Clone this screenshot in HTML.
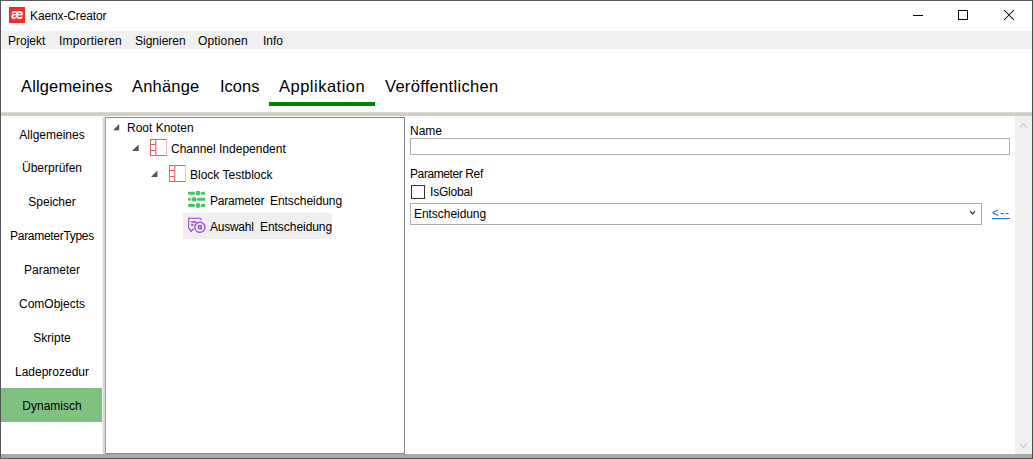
<!DOCTYPE html>
<html><head><meta charset="utf-8">
<style>
*{margin:0;padding:0;box-sizing:border-box}
html,body{width:1033px;height:459px;overflow:hidden;background:#fff}
body{position:relative;font-family:"Liberation Sans",sans-serif;color:#000}
.a{position:absolute;white-space:pre;line-height:1}
.t{position:absolute;white-space:pre;line-height:1;font-size:12px}
.n{position:absolute;left:2px;width:100px;text-align:center;white-space:pre;line-height:1;font-size:12px}
svg{position:absolute;overflow:visible}
</style></head><body>
<!-- window border -->
<div class="a" style="left:0;top:0;width:1033px;height:1px;background:#5c5c5c"></div>
<div class="a" style="left:0;top:0;width:1px;height:459px;background:#555"></div>
<div class="a" style="left:1032px;top:0;width:1px;height:459px;background:#4a4a4a"></div>

<!-- title bar -->
<div class="a" style="left:9px;top:7px;width:16px;height:16px;background:#f22c2c"></div>
<div class="a" style="left:9px;top:7px;width:16px;font-size:14px;font-weight:bold;color:#fff;text-align:center;letter-spacing:-0.5px">æ</div>
<div class="t" style="left:30px;top:10px;letter-spacing:-0.12px">Kaenx-Creator</div>

<!-- window controls -->
<div class="a" style="left:913px;top:15px;width:10px;height:1px;background:#000"></div>
<div class="a" style="left:958px;top:10px;width:10px;height:10px;border:1px solid #000"></div>
<svg style="left:1004px;top:10px" width="10" height="10" viewBox="0 0 10 10"><path d="M0 0L10 10M10 0L0 10" stroke="#000" stroke-width="1.05"/></svg>

<!-- menu -->
<div class="a" style="left:1px;top:31px;width:1031px;height:18px;background:#f0f0f0"></div>
<div class="t" style="left:8px;top:35px">Projekt</div>
<div class="t" style="left:59px;top:35px;letter-spacing:0.2px">Importieren</div>
<div class="t" style="left:135px;top:35px">Signieren</div>
<div class="t" style="left:198px;top:35px;letter-spacing:0.15px">Optionen</div>
<div class="t" style="left:263px;top:35px">Info</div>

<!-- tabs -->
<div class="a" style="left:21px;top:78px;font-size:16.5px;letter-spacing:0.15px">Allgemeines</div>
<div class="a" style="left:132px;top:78px;font-size:16.5px;letter-spacing:0.2px">Anhänge</div>
<div class="a" style="left:220px;top:78px;font-size:16.5px">Icons</div>
<div class="a" style="left:279px;top:78px;font-size:16.5px;letter-spacing:0.5px">Applikation</div>
<div class="a" style="left:385px;top:78px;font-size:16.5px;letter-spacing:0.3px">Veröffentlichen</div>
<div class="a" style="left:269px;top:102px;width:106px;height:4px;background:#007f00"></div>

<!-- separator band -->
<div class="a" style="left:1px;top:112px;width:1031px;height:4px;background:#d1cec0"></div>
<div class="a" style="left:1px;top:112px;width:1031px;height:1px;background:#dcdad0"></div>

<!-- left nav -->
<div class="a" style="left:1px;top:388px;width:101px;height:34px;background:#80c080"></div>
<div class="n" style="top:129px">Allgemeines</div>
<div class="n" style="top:162px">Überprüfen</div>
<div class="n" style="top:196px">Speicher</div>
<div class="n" style="top:230px;letter-spacing:-0.3px">ParameterTypes</div>
<div class="n" style="top:264px">Parameter</div>
<div class="n" style="top:298px">ComObjects</div>
<div class="n" style="top:332px">Skripte</div>
<div class="n" style="top:366px">Ladeprozedur</div>
<div class="n" style="top:400px">Dynamisch</div>

<!-- splitter -->
<div class="a" style="left:102px;top:117px;width:3px;height:337px;background:linear-gradient(90deg,#f0f0f0 0,#f0f0f0 1px,#dadada 1px,#dadada 3px)"></div>

<!-- tree -->
<div class="a" style="left:105px;top:117px;width:300px;height:337px;border:1px solid #828790;border-left-color:#9a9ea6;background:#fff"></div>
<svg style="left:0;top:0" width="1" height="1">
  <path d="M113 130.2L119.2 124L119.2 130.2Z" fill="#525252"/>
  <path d="M132 151L138.6 144.6L138.6 151Z" fill="#525252"/>
  <path d="M151 177L157.4 170.6L157.4 177Z" fill="#525252"/>
</svg>
<div class="t" style="left:127px;top:121.5px">Root Knoten</div>
<!-- channel icon -->
<svg style="left:150px;top:139px" width="17" height="17" viewBox="0 0 17 17">
  <g stroke="#df5f67" stroke-width="1" fill="none">
    <rect x="0.5" y="0.5" width="16" height="16"/>
    <path d="M0.5 5.5H5.5M0.5 11.5H5.5"/>
    <path d="M5.8 0.5V16.5" stroke-width="1.1"/>
    <path d="M16.5 0.5V16.5" stroke="#f0bcc0"/>
  </g>
</svg>
<div class="t" style="left:171px;top:143px">Channel Independent</div>
<!-- block icon -->
<svg style="left:169px;top:165px" width="17" height="17" viewBox="0 0 17 17">
  <g stroke="#df5f67" stroke-width="1" fill="none">
    <rect x="0.5" y="0.5" width="16" height="16"/>
    <path d="M0.5 5.5H5.5M0.5 11.5H5.5"/>
    <path d="M5.8 0.5V16.5" stroke-width="1.1"/>
    <path d="M16.5 0.5V16.5" stroke="#f0bcc0"/>
  </g>
</svg>
<div class="t" style="left:190px;top:168.5px">Block Testblock</div>
<!-- parameter icon -->
<svg style="left:188px;top:190px" width="18" height="18" viewBox="0 0 18 18">
  <g fill="#46c467">
    <rect x="0" y="1.7" width="7" height="3" rx="1"/>
    <rect x="13" y="1.7" width="4.2" height="3" rx="1"/>
    <circle cx="10" cy="3.2" r="2.4"/>
    <rect x="0" y="7.8" width="2.8" height="3" rx="1"/>
    <rect x="9" y="7.8" width="8.2" height="3" rx="1"/>
    <circle cx="6.1" cy="9.3" r="2.4"/>
    <rect x="0" y="14" width="7" height="3" rx="1"/>
    <rect x="13" y="14" width="4.2" height="3" rx="1"/>
    <circle cx="10" cy="15.5" r="2.4"/>
  </g>
</svg>
<div class="t" style="left:210px;top:195px;letter-spacing:-0.2px">Parameter</div>
<div class="t" style="left:270px;top:195px;letter-spacing:-0.05px">Entscheidung</div>
<!-- selection -->
<div class="a" style="left:183px;top:213px;width:149px;height:26px;background:#efefef"></div>
<!-- auswahl icon -->
<svg style="left:186px;top:215px" width="22" height="20" viewBox="0 0 22 20">
  <g stroke="#8d44d2" fill="none" stroke-width="1.1">
    <path d="M2.7 13.2V3.3H13.8Q15 3.3 15 4.5V5.6"/>
    <path d="M2.7 13.2L5 16.3L7.6 13.8" stroke-width="1.2"/>
    <path d="M5 7H10.3M5 10.1H7.7" stroke-width="1.5"/>
    <circle cx="13.9" cy="12.3" r="5.1" stroke-width="1.25"/>
    <circle cx="13.9" cy="12.1" r="1.6" stroke-width="1.5"/>
    <path d="M14.9 13.3L15.9 14.4" stroke-width="1.3"/>
  </g>
</svg>
<div class="t" style="left:210px;top:220.5px;letter-spacing:-0.25px">Auswahl</div>
<div class="t" style="left:260px;top:220.5px;letter-spacing:-0.05px">Entscheidung</div>

<!-- right panel -->
<div class="t" style="left:410px;top:124.6px">Name</div>
<div class="a" style="left:410px;top:138px;width:600px;height:17px;border:1px solid #abadb3"></div>
<div class="t" style="left:410px;top:167.6px;letter-spacing:-0.4px">Parameter Ref</div>
<div class="a" style="left:411px;top:185px;width:14px;height:14px;border:1px solid #333"></div>
<div class="t" style="left:430px;top:185.6px;letter-spacing:-0.2px">IsGlobal</div>
<div class="a" style="left:410px;top:203px;width:572px;height:22px;border:1px solid #acacac"></div>
<div class="t" style="left:414px;top:208px;letter-spacing:-0.05px">Entscheidung</div>
<svg style="left:969px;top:210px" width="7" height="5" viewBox="0 0 7 5"><path d="M1 1L3.5 4L6 1" stroke="#404040" stroke-width="1.2" fill="none"/></svg>
<div class="t" style="left:992px;top:207px;color:#0066cc;letter-spacing:1.3px;transform:scaleX(0.95);transform-origin:0 0">&lt;--</div>
<div class="a" style="left:992px;top:218px;width:18px;height:1px;background:#1a6fd0"></div>

<!-- scrollbar -->
<div class="a" style="left:1015px;top:116px;width:17px;height:338px;background:#f0f0f0"></div>
<svg style="left:1019px;top:122px" width="9" height="7" viewBox="0 0 9 7"><path d="M1 5.4L4.3 1.6L7.7 5.4" stroke="#c6c6c6" stroke-width="1.2" fill="none"/></svg>
<svg style="left:1019px;top:442px" width="9" height="7" viewBox="0 0 9 7"><path d="M1 1.6L4.3 5.4L7.7 1.6" stroke="#c6c6c6" stroke-width="1.2" fill="none"/></svg>

<!-- bottom band -->
<div class="a" style="left:1px;top:454px;width:1031px;height:4px;background:#a9a9a9"></div>
<div class="a" style="left:0;top:458px;width:1033px;height:1px;background:#5a5a5a"></div>
</body></html>
